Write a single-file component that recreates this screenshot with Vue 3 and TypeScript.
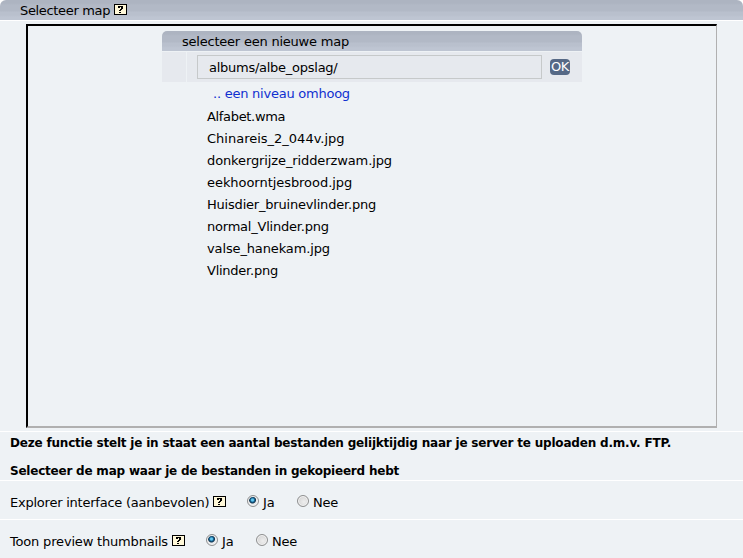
<script setup lang="ts">
import { ref } from 'vue'

interface FileEntry { name: string; spacing: number }
interface Option { key: string; label: string; enabled: boolean }

const path = ref('albums/albe_opslag/')
const files: FileEntry[] = [
  { name: 'Alfabet.wma', spacing: -0.33 },
  { name: 'Chinareis_2_044v.jpg', spacing: 0 },
  { name: 'donkergrijze_ridderzwam.jpg', spacing: -0.11 },
  { name: 'eekhoorntjesbrood.jpg', spacing: -0.05 },
  { name: 'Huisdier_bruinevlinder.png', spacing: -0.2 },
  { name: 'normal_Vlinder.png', spacing: -0.22 },
  { name: 'valse_hanekam.jpg', spacing: -0.13 },
  { name: 'Vlinder.png', spacing: -0.25 },
]
const options = ref<Option[]>([
  { key: 'explorer', label: 'Explorer interface (aanbevolen)', enabled: true },
  { key: 'preview', label: 'Toon preview thumbnails', enabled: true },
])
</script>

<template>
  <main class="page">
    <header class="bar page-bar">
      <span>Selecteer map</span>
      <svg class="help" viewBox="0 0 13 11"><rect x=".5" y=".5" width="12" height="10" rx=".8" /><path d="M4 2h5v1H4zM4 3h2v1H4zM7 3h2v2H7zM6 5h2v1H6zM5 6h2v1H5zM5 8h2v1H5z" /></svg>
    </header>
    <section class="frame">
      <div class="panel">
        <div class="bar panel-bar">selecteer een nieuwe map</div>
        <div class="path-row">
          <div class="cell stub"></div>
          <div class="cell path-cell">
            <input v-model="path" class="path" type="text" />
            <button class="ok" type="button">OK</button>
          </div>
        </div>
        <a class="up">.. een niveau omhoog</a>
        <ul class="files">
          <li v-for="file in files" :key="file.name" :style="{ letterSpacing: file.spacing + 'px' }">{{ file.name }}</li>
        </ul>
      </div>
    </section>
    <section class="intro">
      <p class="first">Deze functie stelt je in staat een aantal bestanden gelijktijdig naar je server te uploaden d.m.v. FTP.</p>
      <p class="second">Selecteer de map waar je de bestanden in gekopieerd hebt</p>
    </section>
    <section v-for="option in options" :key="option.key" class="option" :class="option.key">
      <span class="label">{{ option.label }}</span>
      <svg class="help" viewBox="0 0 13 11"><rect x=".5" y=".5" width="12" height="10" rx=".8" /><path d="M4 2h5v1H4zM4 3h2v1H4zM7 3h2v2H7zM6 5h2v1H6zM5 6h2v1H5zM5 8h2v1H5z" /></svg>
      <label class="choice yes"><input v-model="option.enabled" type="radio" :name="option.key" :value="true" /><span>Ja</span></label>
      <label class="choice no"><input v-model="option.enabled" type="radio" :name="option.key" :value="false" /><span>Nee</span></label>
    </section>
  </main>
</template>

<style>
body { background: #fff; overflow: hidden; }
</style>

<style scoped>
* { box-sizing: border-box; }
.page { width: 743px; height: 558px; display: flex; flex-direction: column; gap: 1px; font: 13px/16px "DejaVu Sans", Verdana, sans-serif; color: #000; white-space: nowrap; }
.bar { height: 20px; display: flex; align-items: center; padding-left: 20px; background: linear-gradient(#adb4c1 0 3px, #b2b9c6 5px 11px, #b9c0cd 12px 15px, #bec5d2 17px); line-height: 20px; }
.page-bar { border-radius: 6px 6px 0 0; }
.page-bar span { width: 90px; letter-spacing: -.33px; padding-top: 1px; }
.help { width: 13px; height: 11px; margin-left: 4px; flex: none; shape-rendering: crispEdges; }
.page-bar .help { margin-bottom: 1px; }
.help rect { fill: #fff8d8; stroke: #000; }
.help path { fill: #000; }
.frame { flex: none; height: 410px; padding: 3px 26px; background: #eef2f5; }
.panel { height: 404px; padding: 5px 134px 0; border: solid; border-width: 2px 1px 2px 2px; border-color: #000 #b0b0b0 #b0b0b0 #000; }
.panel-bar { width: 420px; padding-top: 1px; border-radius: 5px 5px 0 0; letter-spacing: -.22px; }
.path-row { width: 420px; height: 31px; padding-top: 1px; display: flex; gap: 1px; }
.cell { background: #e6e9ee; }
.stub { width: 24px; }
.path-cell { flex: 1; display: flex; align-items: center; padding-left: 10px; }
.path { width: 345px; height: 24px; border: 1px solid #c6c9ca; background: #e6e9ee; padding: 0 11px; font: inherit; letter-spacing: -.26px; color: #000; outline: 0; }
.ok { width: 20px; height: 16px; margin-left: 8px; padding: 0; border: 0; border-radius: 4px; background: #566986; color: #fff; font: 13px/16px "DejaVu Sans", sans-serif; letter-spacing: -.5px; }
.up { display: block; margin: 3px 0 0 51px; color: #1030d0; line-height: 17px; letter-spacing: -.24px; }
.files { list-style: none; margin: 4px 0 0 45px; padding: 0; line-height: 22px; }
.intro { flex: none; height: 48px; background: #eef2f5; padding: 3px 10px 0; font-weight: bold; font-size: 12px; letter-spacing: -.195px; }
.intro p { margin: 0 0 12px; }
.second { letter-spacing: -.215px; }
.option { flex: none; height: 38px; padding: 5px 0 0 10px; display: flex; align-items: center; background: #eef2f5; }
.explorer .label { width: 199px; letter-spacing: -.23px; }
.preview .label { width: 158px; letter-spacing: -.18px; }
.option .help { margin-bottom: 2px; }
.choice { display: flex; align-items: center; letter-spacing: -.2px; }
.choice input { appearance: none; flex: none; width: 12px; height: 12px; margin: -3px 4px 0 0; border: 1px solid #8e8f8f; border-radius: 50%; background: radial-gradient(circle at 60% 60%, #eee, #ccc); box-shadow: inset 0 0 0 1px #f4f4f4; }
.choice input:checked { background: radial-gradient(circle at 45% 40%, #66c8ef 0 1px, #176b9c 2px, #10334e 3px, #e8eaec 4px); }
.yes { margin-left: 21px; width: 50px; }
</style>
